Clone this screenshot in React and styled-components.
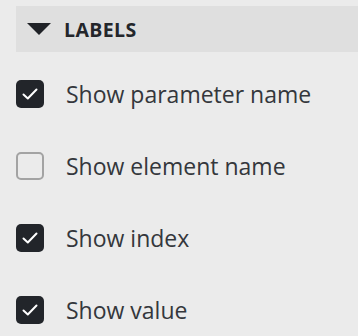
import React from "react";
import styled, { createGlobalStyle } from "styled-components";

const Global = createGlobalStyle`
  html, body {
    margin: 0;
    background: #ebebeb;
  }
  body {
    font-family: "Open Sans", "Noto Sans", sans-serif;
  }
`;

const Panel = styled.div`
  padding: 6px 0 0 16px;
`;

const Header = styled.div`
  display: flex;
  align-items: center;
  gap: 13px;
  height: 46px;
  padding: 0 0 0 11px;
  background: #dfdfdf;
`;

const Caret = styled.span`
  width: 0;
  height: 0;
  border-left: 12px solid transparent;
  border-right: 12px solid transparent;
  border-top: 12px solid #202227;
`;

const Title = styled.span`
  font-size: 19.5px;
  font-weight: 700;
  color: #24262b;
  letter-spacing: 0.4px;
`;

const List = styled.ul`
  list-style: none;
  margin: 0;
  padding: 28px 0 0;
  display: flex;
  flex-direction: column;
  gap: 44px;
`;

const Row = styled.li`
  display: flex;
  align-items: center;
  gap: 22px;
  height: 28px;
`;

const Box = styled.span`
  box-sizing: border-box;
  display: flex;
  align-items: center;
  justify-content: center;
  width: 28px;
  height: 28px;
  border-radius: 5px;
  background: ${(p) => (p.checked ? "#22252a" : "transparent")};
  border: ${(p) => (p.checked ? "none" : "2px solid #a3a3a3")};
`;

const Label = styled.span`
  font-size: 23px;
  color: #34373c;
`;

const Check = () => (
  <svg width="16" height="12" viewBox="0 0 16 12">
    <path d="M1.5 6.5 L5.8 10.5 L14.5 1.5" fill="none" stroke="#fff" strokeWidth="2" strokeLinecap="round" strokeLinejoin="round" />
  </svg>
);

const items = [
  { label: "Show parameter name", checked: true },
  { label: "Show element name", checked: false },
  { label: "Show index", checked: true },
  { label: "Show value", checked: true },
];

export default function App() {
  return (
    <>
      <Global />
      <Panel>
        <Header>
          <Caret />
          <Title>LABELS</Title>
        </Header>
        <List>
          {items.map((it) => (
            <Row key={it.label}>
              <Box checked={it.checked}>{it.checked && <Check />}</Box>
              <Label>{it.label}</Label>
            </Row>
          ))}
        </List>
      </Panel>
    </>
  );
}
